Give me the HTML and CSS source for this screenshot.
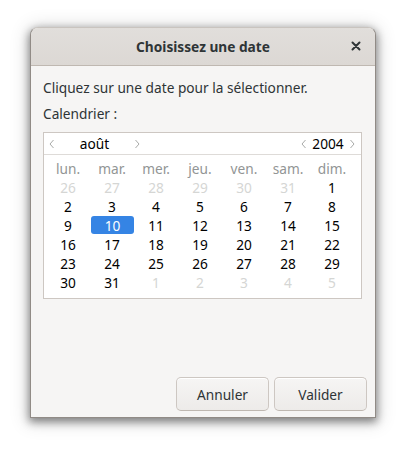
FILE: index.html
```html
<!DOCTYPE html>
<html lang="fr">
<head>
<meta charset="utf-8">
<link rel="stylesheet" href="styles.css">
</head>
<body>
<div class="dialog">
  <div class="headerbar">
    <span class="title">Choisissez une date</span>
    <span class="close">
      <svg width="10" height="10" viewBox="0 0 10 10"><path d="M1.5 1.5 L8.5 8.5 M8.5 1.5 L1.5 8.5" stroke="#2e3436" stroke-width="2" stroke-linecap="round"/></svg>
    </span>
  </div>
  <div class="content">
    <div class="label">Cliquez sur une date pour la sélectionner.</div>
    <div class="label second">Calendrier :</div>
    <div class="calendar">
      <div class="cal-header">
        <span class="arrow"><svg width="6" height="10" viewBox="0 0 6 10"><path d="M4.5 1 L1 5 L4.5 9" fill="none" stroke="#a8aaa8" stroke-width="1"/></svg></span>
        <span class="month">août</span>
        <span class="arrow"><svg width="6" height="10" viewBox="0 0 6 10"><path d="M1.5 1 L5 5 L1.5 9" fill="none" stroke="#a8aaa8" stroke-width="1"/></svg></span>
        <span class="spacer"></span>
        <span class="arrow"><svg width="6" height="10" viewBox="0 0 6 10"><path d="M4.5 1 L1 5 L4.5 9" fill="none" stroke="#a8aaa8" stroke-width="1"/></svg></span>
        <span class="year">2004</span>
        <span class="arrow"><svg width="6" height="10" viewBox="0 0 6 10"><path d="M1.5 1 L5 5 L1.5 9" fill="none" stroke="#a8aaa8" stroke-width="1"/></svg></span>
      </div>
      <div class="grid">
        <span class="dn">lun.</span><span class="dn">mar.</span><span class="dn">mer.</span><span class="dn">jeu.</span><span class="dn">ven.</span><span class="dn">sam.</span><span class="dn">dim.</span>
        <span class="other">26</span><span class="other">27</span><span class="other">28</span><span class="other">29</span><span class="other">30</span><span class="other">31</span><span>1</span>
        <span>2</span><span>3</span><span>4</span><span>5</span><span>6</span><span>7</span><span>8</span>
        <span>9</span><span class="sel">10</span><span>11</span><span>12</span><span>13</span><span>14</span><span>15</span>
        <span>16</span><span>17</span><span>18</span><span>19</span><span>20</span><span>21</span><span>22</span>
        <span>23</span><span>24</span><span>25</span><span>26</span><span>27</span><span>28</span><span>29</span>
        <span>30</span><span>31</span><span class="other">1</span><span class="other">2</span><span class="other">3</span><span class="other">4</span><span class="other">5</span>
      </div>
    </div>
    <div class="fill"></div>
    <div class="actions">
      <button class="btn">Annuler</button>
      <button class="btn">Valider</button>
    </div>
  </div>
</div>
</body>
</html>
```
FILE: styles.css
```css
html, body {
  margin: 0;
  padding: 0;
  background: #ffffff;
}
body {
  width: 410px;
  height: 456px;
  padding: 27px 0 0 30px;
  box-sizing: border-box;
  font-family: "Noto Sans", "Open Sans", sans-serif;
  font-size: 13.7px;
  color: #2e3436;
}
.dialog {
  width: 346px;
  height: 391px;
  box-sizing: border-box;
  background: #f6f5f4;
  border: 1px solid #918b86;
  border-top-color: #c9c4bf;
  border-radius: 8px 8px 0 0;
  box-shadow: 0 3px 9px 1px rgba(0,0,0,0.45), 0 2px 18px 4px rgba(0,0,0,0.12);
  display: flex;
  flex-direction: column;
  overflow: hidden;
}
.headerbar {
  height: 37px;
  flex: none;
  background: linear-gradient(#e1dedb, #dcd8d4);
  border-bottom: 1px solid #bfb8b1;
  display: flex;
  align-items: center;
  justify-content: center;
  position: relative;
}
.title {
  font-weight: bold;
  font-size: 13.7px;
  color: #2e3436;
}
.close {
  position: absolute;
  right: 14px;
  top: 13px;
  width: 10px;
  height: 10px;
  display: flex;
}
.content {
  flex: 1;
  display: flex;
  flex-direction: column;
  padding: 12px 8px 6px 12px;
}
.label {
  line-height: 20px;
  height: 20px;
  color: #2e3436;
}
.label.second {
  margin-top: 6px;
}
.calendar {
  margin-top: 8px;
  margin-right: 5px;
  background: #ffffff;
  border: 1px solid #cdc7c2;
  padding-bottom: 6px;
}
.cal-header {
  height: 21px;
  border-bottom: 1px solid #dedbd8;
  display: flex;
  align-items: center;
  padding: 0 5px 0 4px;
  color: #000;
}
.arrow {
  width: 8px;
  height: 10px;
  display: flex;
  justify-content: center;
}
.month {
  width: 77px;
  text-align: center;
}
.spacer { flex: 1; }
.year {
  width: 40px;
  text-align: center;
}
.grid {
  display: grid;
  grid-template-columns: repeat(7, 44px);
  grid-auto-rows: 19px;
  padding: 4px 0 0 2px;
  color: #000;
}
.grid span {
  display: flex;
  align-items: center;
  justify-content: center;
  line-height: 19px;
}
.grid .dn { color: #929595; }
.grid .other { color: #d5d6d4; }
.grid .sel {
  background: #3584e4;
  color: #ffffff;
  border-radius: 3px;
  margin: 0 0 1px 1px;
}
.fill { flex: 1; }
.actions {
  display: flex;
  justify-content: flex-end;
  gap: 5px;
}
.btn {
  width: 93px;
  height: 34px;
  font-family: inherit;
  font-size: 13.7px;
  color: #2e3436;
  background: linear-gradient(#f6f5f4, #edebe9);
  border: 1px solid #cdc7c2;
  border-bottom-color: #bfb8b1;
  border-radius: 5px;
  box-shadow: inset 0 1px #ffffff;
  padding: 0;
}
```
